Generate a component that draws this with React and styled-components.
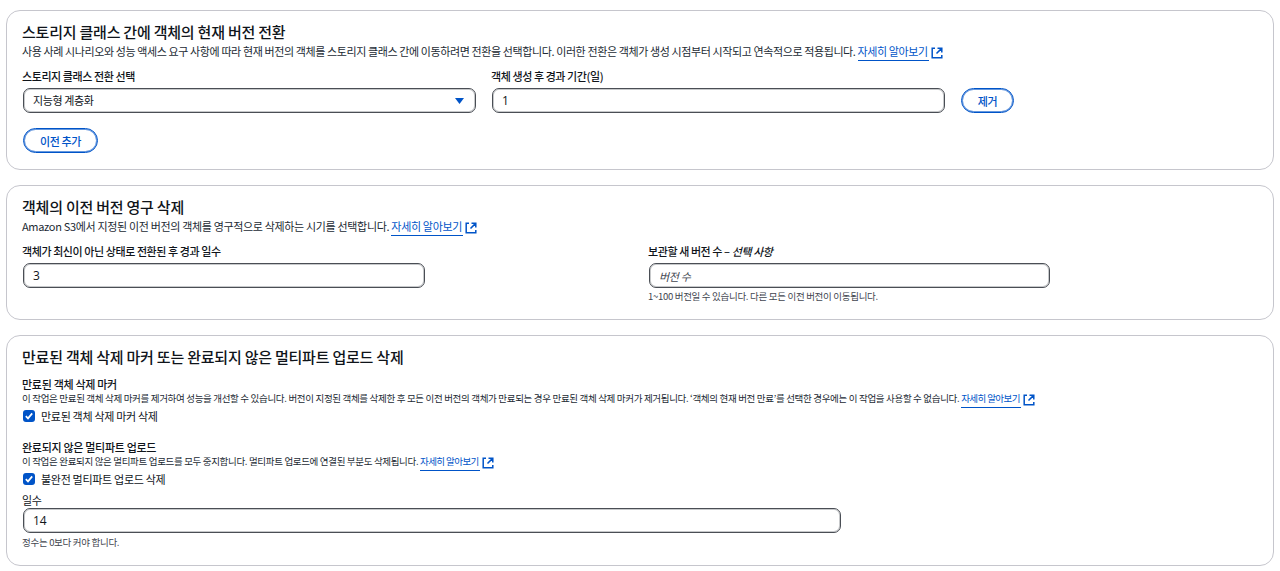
import React from "react";
import styled, { createGlobalStyle } from "styled-components";

const Global = createGlobalStyle`
  html, body { margin: 0; padding: 0; background: #fff; }
  body { font-family: "Noto Sans CJK KR", "Open Sans", sans-serif; color: #16191f; }
`;
const Page = styled.div`
  width: 1280px; height: 571px; box-sizing: border-box; padding: 10px 6px 0;
  display: flex; flex-direction: column; gap: 15px; overflow: hidden;
`;
const Card = styled.section`
  box-sizing: border-box; height: ${p => p.$h}px; border: 1px solid #c6c6cd; border-radius: 14px;
  padding: 11px 15px 0; display: flex; flex-direction: column;
`;
const Title = styled.h2`
  margin: 0; font-size: 15px; line-height: 19px; font-weight: 500; letter-spacing: -0.22px; color: #0f141a;
`;
const Desc = styled.p`
  margin: ${p => p.$mt ?? 3}px 0 0; font-size: ${p => p.$size || 11}px; line-height: ${p => p.$lh || 15}px; letter-spacing: ${p => p.$ls || "-0.39px"}; color: #222a33; white-space: nowrap;
`;
const Link = styled.a`
  color: #0054c8; display: inline-flex; align-items: center;
  & > span { border-bottom: 1px solid #0054c8; padding-bottom: 2px; padding-right: 1px; line-height: 13px; letter-spacing: ${p => (p.$small ? "-0.58px" : "inherit")}; }
  & > svg { margin-left: 2px; }
`;
const Row = styled.div`
  display: flex; gap: ${p => p.$gap || 15}px; align-items: ${p => p.$align || "flex-end"}; margin-top: ${p => p.$mt ?? 8}px;
`;
const Field = styled.div`
  width: ${p => p.$w}px; flex: none; display: flex; flex-direction: column; margin-top: ${p => p.$mt || 0}px;
`;
const Label = styled.label`
  font-size: 11px; line-height: 15px; font-weight: 500; letter-spacing: -0.42px; color: #0f141a; margin-bottom: 4px;
`;
const PlainLabel = styled.label`
  font-size: 11px; line-height: 15px; letter-spacing: -0.3px; color: #0f141a;
`;
const InputBox = styled.div`
  box-sizing: border-box; height: 25px; margin-left: 1px; border: 1px solid #4a4e55; box-shadow: inset 0 0 0 1px rgba(95, 99, 105, 0.35); border-radius: 7px;
  padding: 0 9px; display: flex; align-items: center; justify-content: space-between;
  font-size: 12px; font-family: "Open Sans", sans-serif; color: #0f141a;
`;
const SelectText = styled.span`
  font-family: "Noto Sans CJK KR", sans-serif; font-size: 11px; letter-spacing: -0.4px; padding-bottom: 1px;
`;
const Placeholder = styled.span`
  font-family: "Noto Sans CJK KR", sans-serif; font-size: 11px; font-style: italic; letter-spacing: -0.3px; color: #424650;
`;
const Caret = styled.svg`
  width: 9px; height: 6px; margin-right: 2px; flex: none;
`;
const PillButton = styled.button`
  box-sizing: border-box; width: ${p => p.$w}px; height: 25px; margin-left: 1px; padding: 0; background: #fff;
  border: 1px solid #0054c8; box-shadow: inset 0 0 0 1px rgba(0, 84, 200, 0.6); border-radius: 13px; color: #0054c8;
  font-family: "Noto Sans CJK KR", sans-serif; font-size: 11px; font-weight: 500; letter-spacing: -0.4px;
`;
const Hint = styled.div`
  font-size: 9.5px; line-height: 12px; letter-spacing: -0.3px; color: #424650; margin-top: ${p => p.$mt ?? 2}px;
`;
const Sub = styled.h3`
  margin: ${p => p.$mt || 0}px 0 0; font-size: 11px; line-height: 13px; font-weight: 500; letter-spacing: -0.3px; color: #0f141a;
`;
const CheckRow = styled.div`
  display: flex; align-items: center; gap: 6px; margin-top: 0; font-size: 11px; line-height: 16px; letter-spacing: -0.3px; color: #0f141a;
`;
const Box = styled.span`
  width: 12px; height: 12px; margin-left: 1px; background: #0054c8; border-radius: 3px; display: flex; align-items: center; justify-content: center;
`;

const External = () => (
  <svg width="12" height="12" viewBox="0 0 12 12" fill="none" stroke="#0054c8" strokeWidth="1.5">
    <path d="M4 1.2H1.2v9.6h9.6V8M6.5 1.2h4.3v4.3M10.6 1.4 5.5 6.5" />
  </svg>
);
const More = ({ small }) => (
  <Link $small={small}><span>자세히 알아보기</span><External /></Link>
);
const Check = () => (
  <Box>
    <svg width="10" height="10" viewBox="0 0 10 10" fill="none" stroke="#fff" strokeWidth="1.7">
      <path d="M1.8 5.2 4 7.4l4.2-5" />
    </svg>
  </Box>
);

export default function App() {
  return (
    <Page>
      <Global />
      <Card $h={160}>
        <Title>스토리지 클래스 간에 객체의 현재 버전 전환</Title>
        <Desc>사용 사례 시나리오와 성능 액세스 요구 사항에 따라 현재 버전의 객체를 스토리지 클래스 간에 이동하려면 전환을 선택합니다. 이러한 전환은 객체가 생성 시점부터 시작되고 연속적으로 적용됩니다. <More /></Desc>
        <Row $mt={8}>
          <Field $w={454}>
            <Label>스토리지 클래스 전환 선택</Label>
            <InputBox>
              <SelectText>지능형 계층화</SelectText>
              <Caret viewBox="0 0 9 6"><path d="M0 0h9L4.5 6z" fill="#0054c8" /></Caret>
            </InputBox>
          </Field>
          <Field $w={454}>
            <Label>객체 생성 후 경과 기간(일)</Label>
            <InputBox>1</InputBox>
          </Field>
          <PillButton $w={53}>제거</PillButton>
        </Row>
        <Row $mt={15}>
          <PillButton $w={75}>이전 추가</PillButton>
        </Row>
      </Card>
      <Card $h={135}>
        <Title>객체의 이전 버전 영구 삭제</Title>
        <Desc $ls="-0.33px">Amazon S3에서 지정된 이전 버전의 객체를 영구적으로 삭제하는 시기를 선택합니다. <More /></Desc>
        <Row $gap={223} $mt={8} $align="flex-start">
          <Field $w={403}>
            <Label>객체가 최신이 아닌 상태로 전환된 후 경과 일수</Label>
            <InputBox>3</InputBox>
          </Field>
          <Field $w={402}>
            <Label>보관할 새 버전 수 – <i>선택 사항</i></Label>
            <InputBox><Placeholder>버전 수</Placeholder></InputBox>
            <Hint>1~100 버전일 수 있습니다. 다른 모든 이전 버전이 이동됩니다.</Hint>
          </Field>
        </Row>
      </Card>
      <Card $h={231}>
        <Title>만료된 객체 삭제 마커 또는 완료되지 않은 멀티파트 업로드 삭제</Title>
        <Sub $mt={12}>만료된 객체 삭제 마커</Sub>
        <Desc $size={9.5} $lh={13} $ls="-0.32px" $mt={1}>이 작업은 만료된 객체 삭제 마커를 제거하여 성능을 개선할 수 있습니다. 버전이 지정된 객체를 삭제한 후 모든 이전 버전의 객체가 만료되는 경우 만료된 객체 삭제 마커가 제거됩니다. ‘객체의 현재 버전 만료’를 선택한 경우에는 이 작업을 사용할 수 없습니다. <More small /></Desc>
        <CheckRow><Check />만료된 객체 삭제 마커 삭제</CheckRow>
        <Sub $mt={17}>완료되지 않은 멀티파트 업로드</Sub>
        <Desc $size={9.5} $lh={13} $ls="-0.33px" $mt={1}>이 작업은 완료되지 않은 멀티파트 업로드를 모두 중지합니다. 멀티파트 업로드에 연결된 부분도 삭제됩니다. <More small /></Desc>
        <CheckRow><Check />불완전 멀티파트 업로드 삭제</CheckRow>
        <Field $w={819} $mt={6}>
          <PlainLabel>일수</PlainLabel>
          <InputBox>14</InputBox>
        </Field>
        <Hint $mt={3}>정수는 0보다 커야 합니다.</Hint>
      </Card>
    </Page>
  );
}
